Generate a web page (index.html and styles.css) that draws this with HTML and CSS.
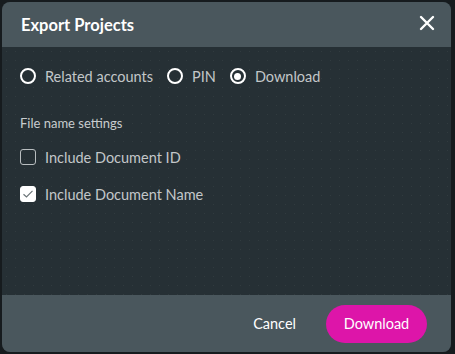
FILE: index.html
```html
<html lang="en">
<head>
  <meta charset="UTF-8">
  <meta name="viewport" content="width=device-width, initial-scale=1.0">
  <title>Export Projects</title>
  <link rel="stylesheet" href="styles.css">
</head>
<body>
  <div class="dialog">
    <div class="dialog-header">
      <h2>Export Projects</h2>
      <button class="close-btn" aria-label="Close">
        <svg width="16" height="16" viewBox="0 0 16 16">
          <path d="M2 2 L14 14 M14 2 L2 14" stroke="#ffffff" stroke-width="2.4" stroke-linecap="round" fill="none"/>
        </svg>
      </button>
    </div>

    <div class="dialog-body">
      <div class="radio-row">
        <label class="radio"><span class="circle"></span>Related accounts</label>
        <label class="radio"><span class="circle"></span>PIN</label>
        <label class="radio checked"><span class="circle"></span>Download</label>
      </div>

      <div class="section-title">File name settings</div>

      <div class="checkbox-group">
        <label class="checkbox"><span class="box"></span>Include Document ID</label>
        <label class="checkbox checked">
          <span class="box">
            <svg width="12" height="10" viewBox="0 0 12 10">
              <path d="M1.5 5.2 L4.5 8 L10.5 1.8" stroke="#6b7478" stroke-width="1.2" fill="none"/>
            </svg>
          </span>Include Document Name</label>
      </div>
    </div>

    <div class="dialog-footer">
      <button class="cancel-btn">Cancel</button>
      <button class="primary-btn">Download</button>
    </div>
  </div>
</body>
</html>
```

FILE: styles.css
```css
body {
  margin: 0;
  background: #161b1e;
  font-family: 'Lato', 'Open Sans', sans-serif;
}

.dialog {
  margin: 2px;
  width: 449px;
  height: 350px;
  border-radius: 8px;
  overflow: hidden;
  display: flex;
  flex-direction: column;
  background-color: #263035;
  background-image: radial-gradient(rgba(255, 255, 255, 0.05) 0.6px, transparent 0.8px);
  background-size: 9px 9px;
}

.dialog-header {
  height: 45px;
  background: #4a575d;
  display: flex;
  align-items: center;
  justify-content: space-between;
  padding: 0 14px 0 19px;
  flex-shrink: 0;
}

.dialog-header h2 {
  margin: 0;
  color: #ffffff;
  font-size: 16.5px;
  font-weight: 700;
  padding-top: 1px;
}

.close-btn {
  background: none;
  border: none;
  padding: 0;
  width: 20px;
  height: 20px;
  display: flex;
  align-items: center;
  justify-content: center;
  margin-top: -4px;
  cursor: pointer;
}

.dialog-body {
  flex: 1;
  padding: 19px 18px 0;
}

.radio-row {
  display: flex;
  gap: 14px;
  height: 20px;
  align-items: center;
}

.radio, .checkbox {
  display: flex;
  align-items: center;
  gap: 9px;
  color: #c3c7c9;
  font-size: 14.5px;
}

.radio .circle {
  width: 12px;
  height: 12px;
  border: 2px solid #ffffff;
  border-radius: 50%;
  display: flex;
  align-items: center;
  justify-content: center;
}

.radio.checked .circle::after {
  content: '';
  width: 7px;
  height: 7px;
  border-radius: 50%;
  background: #ffffff;
}

.section-title {
  margin-top: 29px;
  color: #c8ccce;
  font-size: 13px;
  line-height: 16px;
}

.checkbox-group {
  margin-top: 16px;
  display: flex;
  flex-direction: column;
  gap: 17px;
}

.checkbox {
  height: 20px;
  margin-left: 0;
}

.checkbox .box {
  width: 14px;
  height: 14px;
  border: 1.5px solid #b9bec0;
  border-radius: 3px;
  display: flex;
  align-items: center;
  justify-content: center;
}

.checkbox.checked .box {
  background: #ffffff;
  border-color: #ffffff;
}

.dialog-footer {
  height: 57px;
  background: #4a575d;
  display: flex;
  align-items: center;
  justify-content: flex-end;
  gap: 10px;
  padding: 0 24px 0 0;
  flex-shrink: 0;
}

.cancel-btn {
  background: none;
  border: none;
  color: #ffffff;
  font-family: inherit;
  font-size: 14.5px;
  padding: 0 20px;
  height: 38px;
  cursor: pointer;
}

.primary-btn {
  width: 101px;
  height: 38px;
  border: none;
  border-radius: 19px;
  background: #dd15a9;
  color: #ffffff;
  font-family: inherit;
  font-size: 14.5px;
  cursor: pointer;
}
```
